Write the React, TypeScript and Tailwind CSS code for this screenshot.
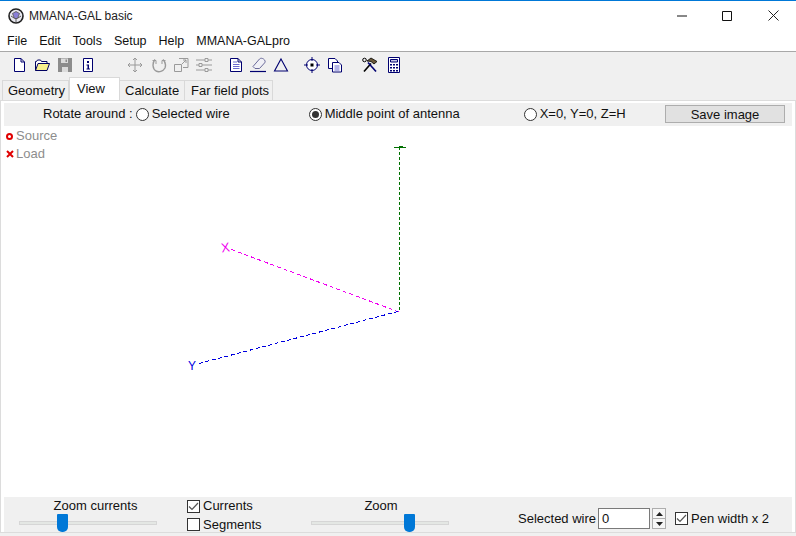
import React from "react";

const N = "#000070";

function Radio({ on }: { on?: boolean }) {
  return (
    <span className="w-[13px] h-[13px] rounded-full border border-[#333] bg-white flex items-center justify-center shrink-0">
      {on && <span className="w-[7px] h-[7px] rounded-full bg-[#333]" />}
    </span>
  );
}

function Check({ on }: { on?: boolean }) {
  return (
    <span className="w-[13px] h-[13px] border border-[#333] bg-white flex items-center justify-center shrink-0">
      {on && (
        <svg width="11" height="11" viewBox="0 0 11 11">
          <path d="M1 5.5 L4 8.5 L10 2" fill="none" stroke="#555" strokeWidth="1.2" />
        </svg>
      )}
    </span>
  );
}

function Slider({ thumb }: { thumb: number }) {
  return (
    <div className="relative w-[138px] h-[19px]">
      <div className="absolute left-0 right-0 top-[7px] h-[4px] bg-[#e4e7e4] border border-[#d6d6d6]" />
      <div className="absolute top-0 w-[11px] h-[18px] bg-[#0078d7] rounded-b-[5px] rounded-t-[1px]" style={{ left: thumb }} />
    </div>
  );
}

function Ic({ ml, children }: { ml: string; children: React.ReactNode }) {
  return (
    <svg width="16" height="16" viewBox="0 0 16 16" fill="none" stroke={N} strokeWidth="1" className={`shrink-0 ${ml}`}>
      {children}
    </svg>
  );
}

const G = "#9a9a9a";

function Toolbar() {
  return (
    <div className="h-[26px] flex items-center pl-[11px] pb-[1px] shrink-0">
      <Ic ml="ml-0"><path d="M3.5 1.5H10L13.5 5V14.5H3.5Z M10 1.5V5H13.5" fill="#fff" /></Ic>
      <Ic ml="ml-[7px]"><path d="M1.5 13.5V4.5H2.5L3.5 3H6.5L7.5 4.5H13V6.5" fill="#fff" stroke="#000060" /><path d="M1.5 13.5L4 6.5H15.5L13 13.5Z" fill="#f7ef8e" stroke="#000060" /></Ic>
      <Ic ml="ml-[7px]"><path d="M1 1H15V15H1Z" fill="#8c8c8c" stroke="none" /><path d="M4 1.5H11V6H4Z M5 10H11V15H5Z" fill="#dcdcdc" stroke="none" /><path d="M8.5 2.5H10V5H8.5Z" fill="#8c8c8c" stroke="none" /></Ic>
      <Ic ml="ml-[7px]"><path d="M3.5 1.5H12.5V14.5H3.5Z" fill="#fff" /><path d="M7 4H9V6H7Z M6.5 7.5H9V11.5H10V12.5H6.5V11.5H7.5V8.5H6.5Z" fill={N} stroke="none" /></Ic>
      <Ic ml="ml-[31px]"><g stroke={G}><path d="M8 1V15 M1 8H15 M6 3L8 1L10 3 M6 13L8 15L10 13 M3 6L1 8L3 10 M13 6L15 8L13 10" /></g></Ic>
      <Ic ml="ml-[8px]"><g stroke={G} strokeWidth="1.4"><path d="M4 2.5C1 6 1.5 12 5 14C8 15.5 12 14.5 14 11C15 8 14.5 5 12 2.5" /><path d="M1.5 3.5H5V7 M14.5 3.5H11V7" strokeWidth="1" /></g></Ic>
      <Ic ml="ml-[6px]"><g stroke={G}><path d="M6 1.5H15V10.5H10 M1.5 7.5H8.5V14.5H1.5Z M9 7L13 3 M10 3H13V6" /></g></Ic>
      <Ic ml="ml-[7px]"><g stroke={G}><path d="M0 3H16 M0 8H16 M0 13H16" /><path d="M9 1.5H12V4.5H9Z M3 6.5H6V9.5H3Z M9 11.5H12V14.5H9Z" fill="#f0f0f0" /></g></Ic>
      <Ic ml="ml-[16px]"><path d="M2.5 1.5H10L13.5 5V14.5H2.5Z M10 1.5V5H13.5" fill="#fff" /><path d="M5 5H9 M5 7.5H11.5 M5 9.5H11.5 M5 11.5H11.5" stroke="#6a6ad0" /></Ic>
      <Ic ml="ml-[6px]"><path d="M3 9.5L9.5 2C10.5 1 12 1 13.5 2C15.5 3.5 15.5 5 14.5 6L9.5 11.5H5Z" fill="#f0f0f6" stroke="#6a6a9a" /><path d="M0 14.5H16" stroke={N} strokeWidth="1.2" /></Ic>
      <Ic ml="ml-[7px]"><path d="M8 2L14.5 14H1.5Z" strokeWidth="1.1" /></Ic>
      <Ic ml="ml-[15px]"><circle cx="8" cy="8" r="5.5" fill="#fff" /><path d="M8 0V4 M8 12V16 M0 8H4 M12 8H16" /><path d="M6.5 6.5H9.5V9.5H6.5Z" fill="#000" stroke="none" /></Ic>
      <Ic ml="ml-[7px]"><path d="M1.5 1.5H8L10.5 4V11.5H1.5Z" fill="#fff" /><path d="M5.5 5.5H12L14.5 8V15H5.5Z" fill="#fff" /><path d="M7.5 9H12.5 M7.5 11H12.5 M7.5 13H12.5" stroke="#6a6ad0" /></Ic>
      <Ic ml="ml-[19px]"><path d="M2 14.5L9 6.5" stroke="#000" strokeWidth="1.6" /><path d="M14 14.5L6 5.5" stroke={N} strokeWidth="1.6" /><path d="M5 4L9 1L15 4.5L12 7L9 4.5Z" fill="#6b5a3a" stroke="#000" strokeWidth="0.8" /><circle cx="2.5" cy="3" r="1.8" stroke="#000" /></Ic>
      <Ic ml="ml-[8px]"><path d="M2.5 0.5H13.5V15.5H2.5Z" fill="#fff" /><path d="M4.5 2.5H11.5V5H4.5Z" fill="#c8c8e8" /><path d="M4 7H6V8.5H4Z M7 7H9V8.5H7Z M10 7H12V8.5H10Z M4 10H6V11.5H4Z M7 10H9V11.5H7Z M10 10H12V11.5H10Z M4 13H6V14.5H4Z M7 13H9V14.5H7Z M10 13H12V14.5H10Z" fill={N} stroke="none" /></Ic>
    </div>
  );
}

function Canvas() {
  return (
    <div className="relative flex-1 min-h-0 bg-white">
      <svg className="absolute left-0 top-0" width="794" height="370" viewBox="1 126 794 370" shapeRendering="crispEdges">
        <path d="M399.5 147V311" stroke="#007000" strokeWidth="1" strokeDasharray="3 2" />
        <path d="M399 312L230 249" stroke="#f000f0" strokeWidth="1" strokeDasharray="4 3" />
        <path d="M398 311.5L197 364" stroke="#0000e0" strokeWidth="1" strokeDasharray="4 2.5" />
        <path d="M394 147.5H406 M399 146.5H403" stroke="#007000" strokeWidth="1" />
        <text x="221" y="252" fontSize="13" fill="#f000f0" fontFamily="Liberation Sans" transform="rotate(-8 225 247)">X</text>
        <text x="188" y="370" fontSize="12" fill="#0000e0" fontFamily="Liberation Sans">Y</text>
      </svg>
      <div className="absolute left-[5px] top-[1px] text-[#8d8d8d] leading-[18px]">
        <div className="flex items-center h-[18px]">
          <span className="w-[7px] h-[7px] rounded-full border-2 border-[#e00000] mr-[3px]" />Source
        </div>
        <div className="flex items-center h-[18px]">
          <svg width="8" height="8" viewBox="0 0 8 8" className="mr-[2px]"><path d="M1 1L7 7M7 1L1 7" stroke="#e00000" strokeWidth="2" /></svg>Load
        </div>
      </div>
    </div>
  );
}

export default function App() {
  return (
    <div className="w-[796px] h-[536px] overflow-hidden bg-[#f0f0f0] flex flex-col text-[13px] text-[#111]" style={{ fontFamily: '"Liberation Sans", Arial, sans-serif' }}>
      <div className="h-[1px] bg-[#0078d7] shrink-0" />
      <div className="h-[29px] bg-white flex items-center pl-[8px] shrink-0">
        <svg width="16" height="16" viewBox="0 0 16 16" className="shrink-0">
          <circle cx="8" cy="8" r="7" fill="#e8e8f0" stroke="#222" strokeWidth="1.6" />
          <path d="M4.5 5.5L8 3.5L11.5 5.5L9.5 10.5H6.5Z" fill="#8a80d8" stroke="#443" strokeWidth="0.7" />
          <path d="M8 10.5V14 M3 8L6 10 M13 8L10 10" stroke="#333" strokeWidth="0.8" />
        </svg>
        <span className="ml-[5px] text-[#222] text-[12px] mt-[1px]">MMANA-GAL basic</span>
        <div className="ml-auto flex items-center">
          <svg width="10" height="10" viewBox="0 0 10 10" className="mr-[35px]"><path d="M0 5H10" stroke="#111" /></svg>
          <svg width="10" height="10" viewBox="0 0 10 10" className="mr-[36px]"><path d="M0.5 0.5H9.5V9.5H0.5Z" fill="none" stroke="#111" /></svg>
          <svg width="11" height="11" viewBox="0 0 11 11" className="mr-[17px]"><path d="M0.5 0.5L10.5 10.5M10.5 0.5L0.5 10.5" stroke="#222" /></svg>
        </div>
      </div>
      <div className="h-[21px] bg-white flex items-center pl-[7px] gap-[12px] shrink-0 text-[12.5px] pt-[1px]">
        <span>File</span><span>Edit</span><span>Tools</span><span>Setup</span><span>Help</span><span>MMANA-GALpro</span>
      </div>
      <div className="h-[1px] bg-[#a8a8a8] shrink-0" />
      <Toolbar />
      <div className="h-[22px] flex items-end pl-[2px] shrink-0">
        <div className="h-[20px] w-[67px] pl-[5px] border border-b-0 border-[#d9d9d9] flex items-center">Geometry</div>
        <div className="h-[23px] w-[51px] pl-[7px] bg-white border border-b-0 border-[#d9d9d9] flex items-start pt-[1px] relative">View</div>
        <div className="h-[20px] w-[65px] pl-[5px] border border-b-0 border-l-0 border-[#d9d9d9] flex items-center">Calculate</div>
        <div className="h-[20px] w-[88px] pl-[6px] border border-b-0 border-l-0 border-[#d9d9d9] flex items-center">Far field plots</div>
      </div>
      <div className="flex-1 min-h-0 bg-white border border-[#dcdcdc] mb-[3px] flex flex-col">
        <div className="mt-[2px] mx-[3px] h-[23px] pb-[1px] shrink-0 bg-[#f0f0f0] flex items-center">
          <span className="ml-[39px]">Rotate around :</span>
          <span className="ml-[3px]"><Radio /></span>
          <span className="ml-[3px] w-[157px]">Selected wire</span>
          <Radio on />
          <span className="ml-[3px] w-[199px]">Middle point of antenna</span>
          <Radio />
          <span className="ml-[3px]">X=0, Y=0, Z=H</span>
          <button className="ml-auto mr-[7px] w-[120px] h-[18px] bg-[#e1e1e1] border border-[#adadad] flex items-center justify-center leading-none">Save image</button>
        </div>
        <Canvas />
        <div className="mx-[3px] h-[35px] shrink-0 bg-[#f0f0f0] flex">
          <div className="w-[153px] ml-[15px] flex flex-col items-start shrink-0">
            <div className="w-[138px] pl-[15px] text-center h-[17px] leading-[18px]">Zoom currents</div>
            <Slider thumb={38} />
          </div>
          <div className="ml-[15px] w-[124px] shrink-0 flex flex-col">
            <div className="flex items-center gap-[3px] h-[18px]"><Check on />Currents</div>
            <div className="flex items-center gap-[3px] h-[19px]"><Check />Segments</div>
          </div>
          <div className="w-[138px] shrink-0 flex flex-col">
            <div className="text-center pl-[2px] h-[17px] leading-[18px]">Zoom</div>
            <Slider thumb={93} />
          </div>
          <div className="ml-[69px] flex items-center h-full pt-[8px] shrink-0">
            <span>Selected wire</span>
            <div className="ml-[2px] w-[52px] h-[21px] bg-white border border-[#7a7a7a] flex items-center pl-[3px]">0</div>
            <div className="ml-[2px] w-[14px] h-[21px] border border-[#adadad] flex flex-col bg-[#f6f6f6]">
              <div className="flex-1 flex items-center justify-center border-b border-[#adadad]"><svg width="7" height="4" viewBox="0 0 7 4"><path d="M3.5 0L7 4H0Z" fill="#222" /></svg></div>
              <div className="flex-1 flex items-center justify-center"><svg width="7" height="4" viewBox="0 0 7 4"><path d="M0 0H7L3.5 4Z" fill="#222" /></svg></div>
            </div>
            <span className="ml-[9px]"><Check on /></span>
            <span className="ml-[3px]">Pen width x 2</span>
          </div>
        </div>
      </div>
    </div>
  );
}
